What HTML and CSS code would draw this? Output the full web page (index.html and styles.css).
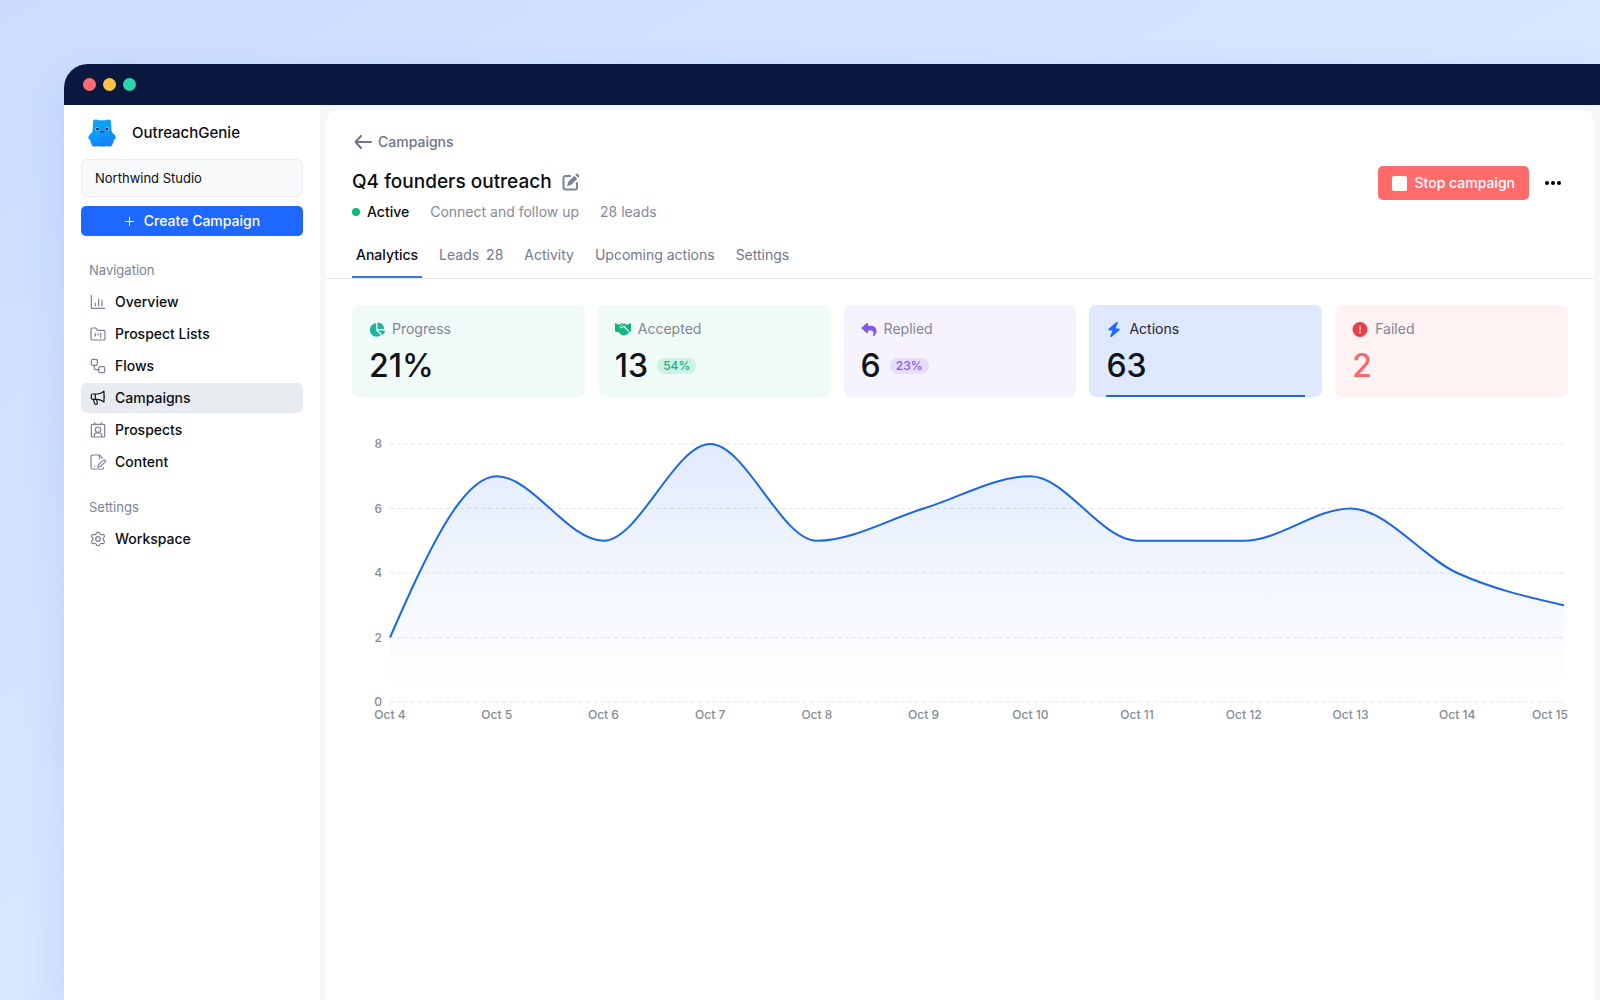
FILE: index.html
```
<!DOCTYPE html>
<html lang="en">
<head>
  <meta charset="UTF-8" />
  <meta name="viewport" content="width=device-width, initial-scale=1.0"/>
  <title>OutreachGenie</title>
  <link rel="stylesheet" href="styles.css">
</head>
<body>
  <div class="window">
    <div class="titlebar">
      <span class="dot red"></span>
      <span class="dot yellow"></span>
      <span class="dot green"></span>
    </div>

    <div class="app">
      <aside class="sidebar">
        <div class="brand">
          <svg class="mascot" viewBox="0 0 28 28" aria-hidden="true">
            <defs>
              <linearGradient id="fur" x1="0" y1="0" x2="0.3" y2="1">
                <stop offset="0" stop-color="#0aa5f5"/>
                <stop offset="0.6" stop-color="#0c9bfa"/>
                <stop offset="1" stop-color="#1682f5"/>
              </linearGradient>
            </defs>
            <path fill="url(#fur)" d="M5 3C5 .8 7 .2 9 .8c1 .4 1.500.5 2.500.5h5c1 0 1.500-.1 2.500-.5 2-.6 4 0 4 2.200-.1 1.500.2 3 .3 4.500.2 2 .2 4 .7 6 1.800 1.200 3.600 3 3.700 4.900.1 1.300-.8 2.200-1.900 2.300.2 1.800-.5 3.300-1.400 4.400.4 1.600-.8 2.400-2.400 2.400-1 0-2-.1-2.700-.3-3.500.4-7 .4-10.500 0-.8.200-1.700.3-2.700.3-1.600 0-2.800-.8-2.400-2.400-.9-1.100-1.600-2.600-1.400-4.400-1.100-.1-2-1-1.900-2.300.1-1.900 1.900-3.700 3.700-4.900.5-2 .5-4 .7-6 .1-1.500.2-3 .2-4.500z"/>
            <path fill="#1478ee" opacity=".4" d="M9.500 18.500c3 1.800 6 1.800 9 0-.8 3.500-8.200 3.500-9 0zM10 27l2-1.500 2 1.500zM18 27l-2-1.500-2 1.500z"/>
            <circle cx="9.200" cy="10" r="1.900" fill="#9be4ff"/>
            <circle cx="19.300" cy="10" r="1.900" fill="#9be4ff"/>
            <circle cx="9.400" cy="10.100" r="1.400" fill="#10233f"/>
            <circle cx="19.100" cy="10.100" r="1.400" fill="#10233f"/>
            <path d="M12.500 12.500c1 .6 2.500.6 3.500 0" fill="none" stroke="#10233f" stroke-width="1.300" stroke-linecap="round"/>
          </svg>
          <span class="brand-name">OutreachGenie</span>
        </div>
        <button class="workspace">Northwind Studio</button>
        <button class="create">
          <svg class="plus" viewBox="0 0 12 12" aria-hidden="true"><path d="M6 1v10M1 6h10"/></svg>
          Create Campaign
        </button>

        <nav>
          <h2 class="nav-title">Navigation</h2>
          <a class="nav-item" href="#">
            <svg class="icon" viewBox="0 0 24 24" aria-hidden="true"><path d="M2 2v18.500a1 1 0 0 0 1 1h19M8 13.500v4M13 7.500v10M18 9.500v8"/></svg>
            Overview
          </a>
          <a class="nav-item" href="#">
            <svg class="icon" viewBox="0 0 24 24" aria-hidden="true"><path d="M1.500 5a2 2 0 0 1 2-2h5l3 3.500h9a2 2 0 0 1 2 2V19a2 2 0 0 1-2 2h-17a2 2 0 0 1-2-2zM8 11.500V15M12 11.500v2M16 11.500V17"/></svg>
            Prospect Lists
          </a>
          <a class="nav-item" href="#">
            <svg class="icon" viewBox="0 0 24 24" aria-hidden="true"><rect x="2" y="2" width="9" height="9" rx="2"/><rect x="13" y="13" width="9" height="9" rx="2"/><path d="M6.500 11v4.500a2 2 0 0 0 2 2H13"/></svg>
            Flows
          </a>
          <a class="nav-item active" href="#">
            <svg class="icon" viewBox="0 0 24 24" aria-hidden="true"><path d="M8 6h3c4 0 7-1.500 10-4v16c-3-2.500-6-4-10-4H4a2 2 0 0 1-2-2V8a2 2 0 0 1 2-2zM8 6v8M5 14l2 6.500a1.600 1.600 0 0 0 2 1l1-.3a1.600 1.600 0 0 0 1-2.200L9.500 14M21.500 9v2.500"/></svg>
            Campaigns
          </a>
          <a class="nav-item" href="#">
            <svg class="icon" viewBox="0 0 24 24" aria-hidden="true"><rect x="2" y="3.500" width="20" height="19" rx="1.500"/><path d="M7 1v2.500M17 1v2.500M6.500 22v-2a3.500 3.500 0 0 1 3.500-3.500h4a3.500 3.500 0 0 1 3.500 3.500v2"/><circle cx="12" cy="11.500" r="4"/></svg>
            Prospects
          </a>
          <a class="nav-item" href="#">
            <svg class="icon" viewBox="0 0 24 24" aria-hidden="true"><path d="M18.500 6.500L14.500 1.500H4A2.500 2.500 0 0 0 1.500 4v16A2.500 2.500 0 0 0 4 22.500h14.500a2 2 0 0 0 2-2M14 1.500V7M20 9.500a1.800 1.800 0 0 1 2.500 2.600L16 18.500l-4 1 1-4zM7 18.500h.1"/></svg>
            Content
          </a>

          <h2 class="nav-title second">Settings</h2>
          <a class="nav-item" href="#">
            <svg class="icon" viewBox="0 0 24 24" aria-hidden="true"><path d="M9.500 3.300a2.700 2.700 0 0 1 5 0 2.700 2.700 0 0 0 3.700 2 2.600 2.600 0 0 1 2.600 4.400 2.700 2.700 0 0 0 0 4.600 2.600 2.600 0 0 1-2.600 4.400 2.700 2.700 0 0 0-3.700 2 2.700 2.700 0 0 1-5 0 2.700 2.700 0 0 0-3.700-2 2.600 2.600 0 0 1-2.600-4.400 2.700 2.700 0 0 0 0-4.600 2.600 2.600 0 0 1 2.600-4.400 2.700 2.700 0 0 0 3.700-2z"/><circle cx="12" cy="12" r="3.500"/></svg>
            Workspace
          </a>
        </nav>
      </aside>

      <main class="main">
        <section class="panel">
          <header class="head">
            <div class="head-text">
              <a class="back" href="#">
                <svg class="arrow" viewBox="0 0 18 14" aria-hidden="true"><path d="M17 7H1.500M7 1L1.500 7 7 13"/></svg>
                Campaigns
              </a>
              <div class="title-row">
                <h1>Q4 founders outreach</h1>
                <button class="edit" aria-label="Rename campaign">
                  <svg viewBox="0 0 18 18" aria-hidden="true">
                    <path class="frame" d="M8 3H3.500A2 2 0 0 0 1.500 5v9.500a2 2 0 0 0 2 2h9.500a2 2 0 0 0 2-2V10"/>
                    <path class="pen" d="M12.300 2.800l2.900 2.900-6.200 6.200-3.900 1 1-3.900zM13.300 1.800l.8-.8c.5-.5 1.100-.5 1.600 0l1.300 1.300c.5.5.5 1.100 0 1.600l-.8.8z"/>
                  </svg>
                </button>
              </div>
              <div class="meta">
                <span class="status">Active</span>
                <span>Connect and follow up</span>
                <span>28 leads</span>
              </div>
            </div>
            <div class="actions">
              <button class="stop"><span class="stop-icon"></span>Stop campaign</button>
              <button class="more" aria-label="More">
                <svg viewBox="0 0 16 4" aria-hidden="true"><circle cx="2" cy="2" r="2"/><circle cx="8" cy="2" r="2"/><circle cx="14" cy="2" r="2"/></svg>
              </button>
            </div>
          </header>

          <nav class="tabs">
            <a class="tab selected" href="#">Analytics</a>
            <a class="tab" href="#">Leads <span class="count">28</span></a>
            <a class="tab" href="#">Activity</a>
            <a class="tab" href="#">Upcoming actions</a>
            <a class="tab" href="#">Settings</a>
          </nav>

          <div class="cards">
            <button class="card teal">
              <span class="label">
                <svg viewBox="0 0 576 512" aria-hidden="true"><path d="M304 240V16.600c0-9 7-16.600 16-16.600C443.700 0 544 100.300 544 224c0 9-7.600 16-16.600 16zM32 272C32 150.700 122.100 50.300 239 34.300c9.200-1.300 17 6.100 17 15.400V288L412.500 444.500c6.700 6.700 6.200 17.700-1.500 23.100C371.800 495.600 323.800 512 272 512 139.500 512 32 404.600 32 272zM558.400 288c9.300 0 16.600 7.800 15.400 17-7.700 55.900-34.600 105.600-73.900 142.300-6 5.600-15.400 5.200-21.200-.7L320 288z"/></svg>
                Progress
              </span>
              <span class="value">21%</span>
            </button>
            <button class="card green">
              <span class="label">
                <svg viewBox="0 0 16 13" aria-hidden="true">
                  <path d="M0 .6C0 .1.500-.1.900.2L3 1.500c.5.3 1 .3 1.500 0L6.300.5C7 .2 7.600.1 8.300.3L5.500 2.700c-1.300 1.100-.3 3 1.300 2.500l1.900-1.100 5 5c.8.8-.2 2-1.100 1.400.2 1-1 1.600-1.700.9-.2.900-1.400 1.200-2 .5-.5.8-1.600.8-2.200.2L3.300 9H1.200C.5 9 0 8.500 0 7.800z"/>
                  <path d="M16 .6c0-.5-.5-.7-.9-.4L13 1.500c-.5.3-1 .3-1.500 0L10.200.7c-.7-.4-1.500-.3-2.100.2L6 2.900c-.8.7-.1 1.700.8 1.200L9.300 2.500 14.700 9c.8 0 1.300-.5 1.300-1.200z"/>
                </svg>
                Accepted
              </span>
              <span class="value">13 <span class="badge">54%</span></span>
            </button>
            <button class="card purple">
              <span class="label">
                <svg viewBox="0 0 512 512" aria-hidden="true"><path d="M205 34.800c11.500 5.100 19 16.600 19 29.200v64h112c97.200 0 176 78.800 176 176 0 113.300-81.500 163.900-100.200 174.100-2.500 1.400-5.300 1.900-8.100 1.900-10.900 0-19.700-8.900-19.700-19.700 0-7.500 4.300-14.400 9.800-19.500 9.400-8.800 22.200-26.400 22.200-56.700 0-53-43-96-96-96h-96v64c0 12.600-7.400 24.100-19 29.200s-25 3-34.400-5.400l-160-144C3.900 225.700 0 217.100 0 208s3.900-17.700 10.600-23.800l160-144c9.400-8.500 22.900-10.600 34.400-5.400z"/></svg>
                Replied
              </span>
              <span class="value">6 <span class="badge">23%</span></span>
            </button>
            <button class="card blue current">
              <span class="label">
                <svg viewBox="0 0 448 512" aria-hidden="true"><path d="M349.400 44.600c5.900-13.700 1.500-29.700-10.600-38.500s-28.600-8-39.900 1.800l-256 224c-10 8.800-13.600 22.900-8.900 35.300S50.700 288 64 288h111.500L98.600 467.400c-5.900 13.700-1.500 29.700 10.600 38.500s28.600 8 39.900-1.800l256-224c10-8.800 13.600-22.900 8.900-35.300s-16.600-20.700-30-20.700H272.500z"/></svg>
                Actions
              </span>
              <span class="value">63</span>
            </button>
            <button class="card rose">
              <span class="label">
                <svg viewBox="0 0 512 512" aria-hidden="true"><path d="M256 512A256 256 0 1 0 256 0a256 256 0 1 0 0 512zm0-384c13.300 0 24 10.700 24 24v112c0 13.300-10.700 24-24 24s-24-10.700-24-24V152c0-13.300 10.700-24 24-24zm-32 224a32 32 0 1 1 64 0 32 32 0 1 1-64 0z"/></svg>
                Failed
              </span>
              <span class="value">2</span>
            </button>
          </div>

          <div class="chart">
            <ul class="y-axis">
              <li>8</li><li>6</li><li>4</li><li>2</li><li>0</li>
            </ul>
            <svg class="plot" viewBox="0 0 1100 256" preserveAspectRatio="none" role="img" aria-label="Actions per day">
              <defs>
                <linearGradient id="area" x1="0" y1="0" x2="0" y2="1">
                  <stop offset="0" stop-color="#1f66f0" stop-opacity="0.13"/>
                  <stop offset="0.95" stop-color="#1f66f0" stop-opacity="0"/>
                </linearGradient>
              </defs>
              <path class="grid" d="M0 0H1100M0 64H1100M0 128H1100M0 192H1100M0 256H1100"/>
              <path fill="url(#area)" d="M0 192C33.300 112 66.700 32 100 32S166.700 96 200 96 266.700 0 300 0 366.700 96 400 96 466.700 74.700 500 64 566.700 32 600 32 666.700 96 700 96H800C833.300 96 866.700 64 900 64S966.700 112 1000 128 1066.700 152 1100 160V256H0z"/>
              <path class="line" d="M0 192C33.300 112 66.700 32 100 32S166.700 96 200 96 266.700 0 300 0 366.700 96 400 96 466.700 74.700 500 64 566.700 32 600 32 666.700 96 700 96H800C833.300 96 866.700 64 900 64S966.700 112 1000 128 1066.700 152 1100 160"/>
            </svg>
            <ul class="x-axis">
              <li><span>Oct 4</span></li>
              <li><span>Oct 5</span></li>
              <li><span>Oct 6</span></li>
              <li><span>Oct 7</span></li>
              <li><span>Oct 8</span></li>
              <li><span>Oct 9</span></li>
              <li><span>Oct 10</span></li>
              <li><span>Oct 11</span></li>
              <li><span>Oct 12</span></li>
              <li><span>Oct 13</span></li>
              <li><span>Oct 14</span></li>
              <li><span>Oct 15</span></li>
            </ul>
          </div>
        </section>
      </main>
    </div>
  </div>
</body>
</html>
```
FILE: styles.css
```
* {
  box-sizing: border-box;
}

body {
  margin: 0;
  min-height: 100vh;
  padding: 64px 0 0 64px;
  display: flex;
  background: linear-gradient(150deg, #cbdcff 0%, #d8e6ff 50%, #d4e3ff 100%);
  font-family: Inter, "Liberation Sans", sans-serif;
  font-size: 14px;
  line-height: 20px;
  color: #0b0d12;
}

h1, h2, ul {
  margin: 0;
  padding: 0;
  font-weight: 500;
}

li {
  list-style: none;
}

a {
  color: inherit;
  text-decoration: none;
}

button {
  padding: 0;
  border: none;
  background: none;
  font: inherit;
  color: inherit;
  cursor: pointer;
}

.window {
  flex: 1;
  display: flex;
  flex-direction: column;
  border-radius: 24px 0 0 0;
  overflow: hidden;
  box-shadow: 0 16px 40px rgba(40, 90, 200, 0.12);
}

.titlebar {
  display: flex;
  align-items: center;
  gap: 7px;
  height: 41px;
  padding: 0 19px;
  background: #0a1840;
}

.dot {
  width: 13px;
  height: 13px;
  border-radius: 50%;
}

.red { background: #ff6b6e; }
.yellow { background: #ffc444; }
.titlebar .green { background: #2ad4ae; }

.app {
  flex: 1;
  display: flex;
  background: #f5f7f8;
}

/* sidebar */
.sidebar {
  width: 256px;
  padding: 13px 17px;
  background: #fff;
}

.brand {
  display: flex;
  align-items: center;
  gap: 16px;
  padding-left: 7px;
  font-size: 15px;
  line-height: 28px;
  font-weight: 500;
}

.mascot {
  width: 28px;
  height: 28px;
}

.brand-name {
  padding-top: 1px;
}

.workspace {
  display: block;
  width: 100%;
  height: 38px;
  margin: 12px 0 9px;
  padding: 0 13px;
  border: 1px solid #e9ecf0;
  border-radius: 6px;
  background: #f8f9fb;
  font-size: 13px;
  text-align: left;
}

.create {
  display: flex;
  align-items: center;
  justify-content: center;
  gap: 9px;
  width: 100%;
  height: 30px;
  border-radius: 5px;
  background: #1f68ff;
  color: #fff;
  font-weight: 500;
}

.plus {
  width: 11px;
  height: 11px;
  fill: none;
  stroke: #fff;
  stroke-width: 1.2;
}

.nav-title {
  margin-top: 24px;
  padding: 0 8px;
  font-size: 13px;
  font-weight: 400;
  color: #7d8295;
}

.nav-title + .nav-item {
  margin-top: 7px;
}

.nav-title.second {
  margin-top: 20px;
}

.nav-item {
  display: flex;
  align-items: center;
  gap: 9px;
  height: 30px;
  margin-bottom: 2px;
  padding: 0 9px;
  border-radius: 5px;
  font-weight: 500;
}

.nav-item.active {
  background: #e8ebf0;
}

.icon {
  width: 16px;
  height: 16px;
  fill: none;
  stroke: #7b8196;
  stroke-width: 1.8;
  stroke-linecap: round;
  stroke-linejoin: round;
}

.active .icon {
  stroke: #14161c;
}

/* main panel */
.main {
  flex: 1;
  display: flex;
  padding: 5px 6px 0;
}

.panel {
  flex: 1;
  border-radius: 12px 12px 0 0;
  background: #fff;
}

.head {
  display: flex;
  justify-content: space-between;
  padding: 22px 26px 0;
}

.back {
  display: flex;
  align-items: center;
  gap: 6px;
  padding-left: 2px;
  font-weight: 500;
  color: #6f748a;
}

.arrow {
  width: 18px;
  height: 14px;
  fill: none;
  stroke: #6f748a;
  stroke-width: 2;
  stroke-linecap: round;
  stroke-linejoin: round;
}

.title-row {
  display: flex;
  align-items: center;
  gap: 10px;
  margin: 17px 0 7px;
}

h1 {
  font-size: 19px;
  line-height: 26px;
}

.edit svg {
  display: block;
  width: 18px;
  height: 18px;
}

.frame {
  fill: none;
  stroke: #7b8196;
  stroke-width: 2;
  stroke-linecap: round;
}

.pen {
  fill: #7b8196;
}

.meta {
  display: flex;
  gap: 21px;
  color: #858a99;
}

.status {
  display: flex;
  align-items: center;
  gap: 7px;
  font-weight: 500;
  color: #0b0d12;
}

.status::before {
  content: "";
  width: 8px;
  height: 8px;
  border-radius: 50%;
  background: #0cb97a;
}

.actions {
  display: flex;
  align-items: center;
  align-self: flex-start;
  gap: 16px;
  margin-top: 34px;
  padding-right: 7px;
}

.stop {
  display: flex;
  align-items: center;
  gap: 8px;
  height: 34px;
  padding: 0 14px;
  border-radius: 5px;
  background: #ff6b6b;
  color: #fff;
  font-weight: 500;
}

.stop-icon {
  width: 15px;
  height: 15px;
  border-radius: 2px;
  background: #fff;
}

.more svg {
  display: block;
  width: 16px;
  height: 4px;
}

.tabs {
  display: flex;
  gap: 13px;
  margin-top: 14px;
  padding: 0 26px;
  border-bottom: 1px solid #e4e6ea;
  color: #737890;
}

.tab {
  height: 42px;
  padding: 9px 4px;
  border-bottom: 2px solid transparent;
}

.tab.selected {
  border-color: #3a7be8;
  color: #0b0d12;
  font-weight: 500;
}

.count {
  margin-left: 3px;
}

/* stat cards */
.cards {
  display: grid;
  grid-template-columns: repeat(5, 1fr);
  gap: 13px;
  padding: 26px 26px 0;
}

.card {
  position: relative;
  height: 92px;
  padding: 14px 17px;
  border-radius: 7px;
  text-align: left;
}

.label {
  display: flex;
  align-items: center;
  gap: 7px;
  color: #7f8793;
}

.label svg {
  width: 16px;
  height: 15px;
}

.value {
  display: flex;
  align-items: center;
  gap: 9px;
  margin-top: 9px;
  font-size: 32px;
  line-height: 36px;
  font-weight: 500;
  color: #101418;
}

.badge {
  padding: 0 6px;
  border-radius: 8px;
  font-size: 12px;
  line-height: 16px;
}

.teal { background: #f0faf9; }
.teal svg { fill: #1fb3a0; }

.card.green { background: #f0faf7; }
.card.green svg { fill: #16b384; }
.card.green .badge { background: #cdf1e4; color: #1fae7f; }

.purple { background: #f6f3fe; }
.purple svg { fill: #8358ec; }
.purple .badge { background: #e6dcfc; color: #8a5ce8; }

.blue { background: #dee8fe; }
.blue svg { fill: #1f68ff; }
.blue .label { color: #1b2435; }

.rose { background: #fef2f2; }
.rose svg { fill: #ea4046; }
.rose .value { color: #f46b6d; }

.current::after {
  content: "";
  position: absolute;
  left: 17px;
  right: 17px;
  bottom: 0;
  height: 2px;
  background: #2166e0;
}

/* chart */
.chart {
  display: grid;
  grid-template-columns: 30px 1fr;
  column-gap: 8px;
  padding: 47px 30px 0 26px;
  font-size: 12px;
  line-height: 16px;
  color: #858a94;
}

.y-axis {
  display: flex;
  flex-direction: column;
  justify-content: space-between;
  text-align: right;
}

.y-axis li {
  height: 0;
  line-height: 0;
}

.plot {
  width: 100%;
  height: 258px;
  overflow: visible;
}

.grid {
  fill: none;
  stroke: #e3e5e9;
  stroke-width: 1;
  stroke-dasharray: 4 3;
  vector-effect: non-scaling-stroke;
}

.line {
  fill: none;
  stroke: #1b66e8;
  stroke-width: 2;
  vector-effect: non-scaling-stroke;
}

.x-axis {
  grid-column: 2;
  display: flex;
  justify-content: space-between;
  padding-top: 5px;
}

.x-axis li {
  display: flex;
  justify-content: center;
  width: 0;
  white-space: nowrap;
}

.x-axis li:last-child {
  justify-content: flex-end;
}

.x-axis li:last-child span {
  margin-right: -4px;
}
```
